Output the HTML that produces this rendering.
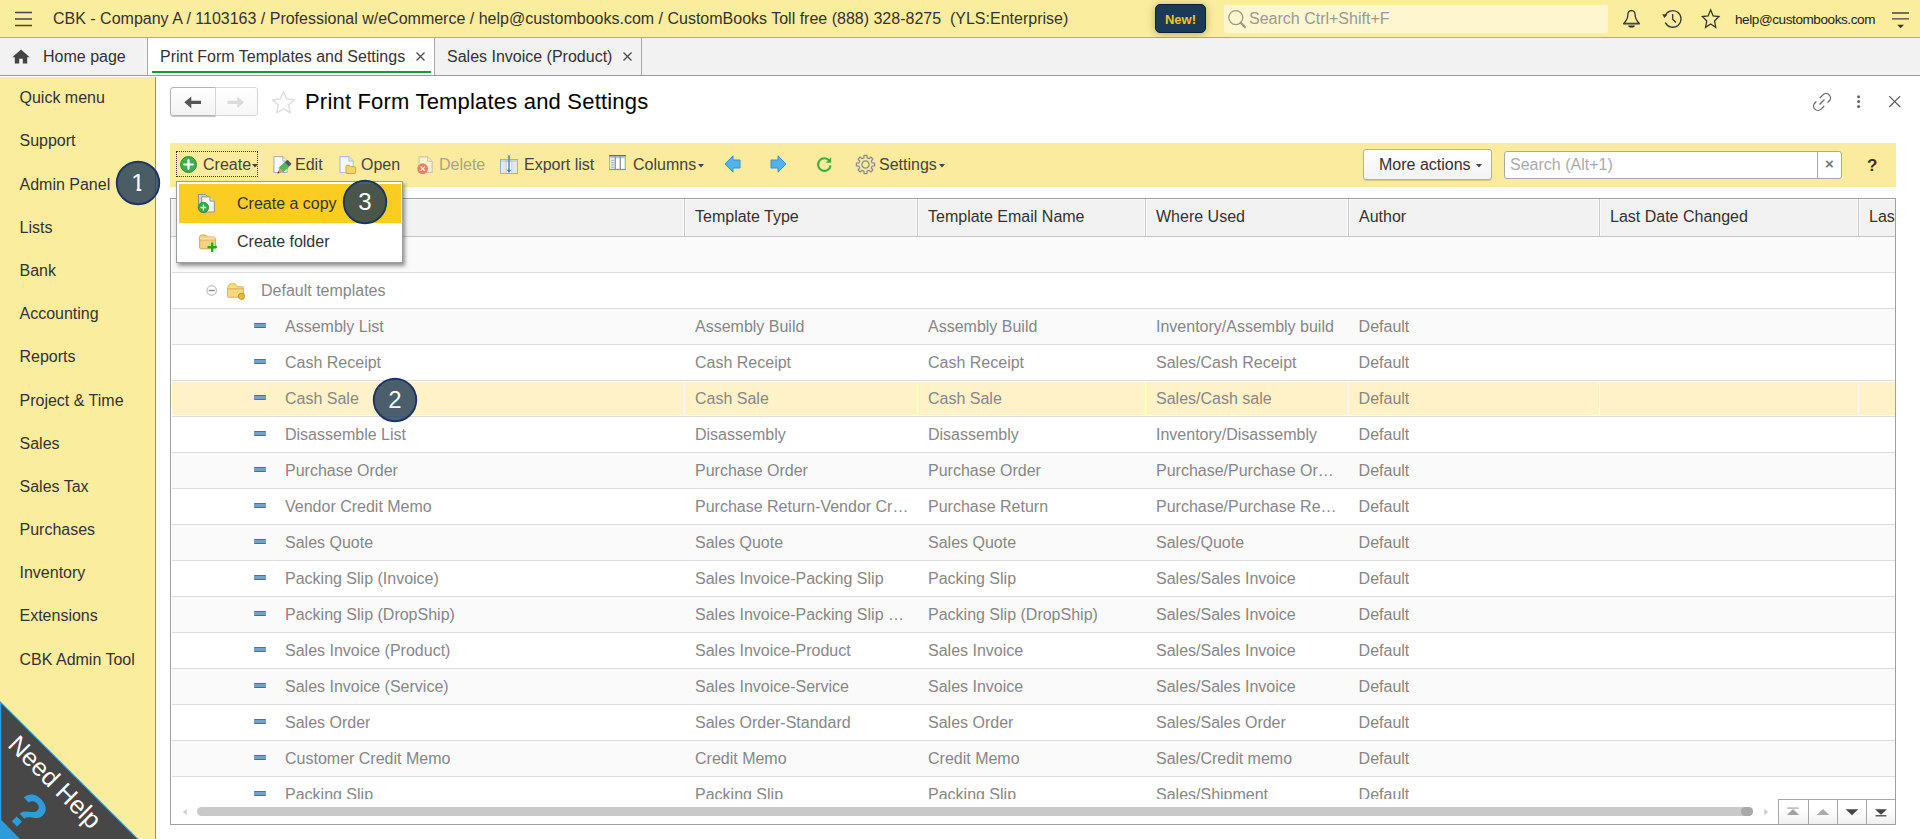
<!DOCTYPE html>
<html lang="en">
<head>
<meta charset="utf-8">
<title>Print Form Templates and Settings</title>
<style>
*{box-sizing:border-box;margin:0;padding:0}
html,body{width:1920px;height:839px;overflow:hidden;background:#fff}
body{font-family:"Liberation Sans",Arial,sans-serif;font-size:16px;color:#333;position:relative}
.abs{position:absolute}
/* top bar */
#topbar{position:absolute;left:0;top:0;width:1920px;height:38px;background:#fbed9e;border-bottom:1px solid #b3ac8a}
#topbar .title{position:absolute;left:53px;top:0;line-height:37px;font-size:16px;color:#333;white-space:pre}
#newbadge{position:absolute;left:1155px;top:4px;width:51px;height:29px;background:#1b3a57;border:1px solid #0e1f30;border-radius:5px;color:#f7c325;font-weight:bold;font-size:13px;line-height:29px;text-align:center;box-shadow:0 1px 8px rgba(0,0,0,.3)}
#gsearch{position:absolute;left:1224px;top:5px;width:384px;height:28px;background:#fef6cf;border-radius:2px}
#gsearch span{position:absolute;left:25px;top:0;line-height:27px;color:#999;font-size:16px}
#user{position:absolute;left:1735px;top:1px;line-height:38px;font-size:13.5px;letter-spacing:-0.4px;color:#222}
/* tab bar */
#tabbar{position:absolute;left:0;top:38px;width:1920px;height:38px;background:#f2f2f2;border-bottom:1px solid #999}
.tab{position:absolute;top:0;height:37px;line-height:38px;font-size:16px;color:#333;border-right:1px solid #a9a9a9;white-space:nowrap}
/* sidebar */
#side{position:absolute;left:0;top:77px;width:156px;height:762px;background:#fbed9e;border-right:1px solid #9b925e}
#side div{position:absolute;left:19.500px;font-size:16px;color:#333;line-height:20px;white-space:nowrap}
/* main */
#toolbar{position:absolute;left:170px;top:143px;width:1726px;height:44px;background:#fbeb9e}
.tb{position:absolute;top:0;line-height:43px;font-size:16px;color:#444;white-space:nowrap}
#table{position:absolute;left:170px;top:198px;width:1726px;height:627px;border:1px solid #a0a0a0;background:#fff;overflow:hidden}
.hd{position:absolute;top:0;height:38px;background:#f2f2f2;border-bottom:1px solid #c6c6c6;left:0;width:1724px}
.hc{position:absolute;top:0;height:37px;line-height:36px;font-size:16px;color:#333;border-left:1px solid #c9c9c9;padding-left:10px;white-space:nowrap;box-shadow:inset 1px 0 0 #fbfbfb,inset -1px 0 0 #fbfbfb,inset 0 1px 0 #fbfbfb}
.row{position:absolute;left:0;width:1724px;height:36px;border-bottom:1px solid #dcdcdc;background:#fff;font-size:16px;color:#878787;line-height:35px}
.row.alt{background:#fafafa}
.row.sel{background:#fff2c8;box-shadow:inset 0 1px 0 #fffdf5,inset 0 -1px 0 #fffdf5}
.row.sel b{position:absolute;top:0;width:1px;height:35px;background:#fffdf5}
.row span{position:absolute;top:0;white-space:nowrap;overflow:hidden;text-overflow:ellipsis}
.c1{left:114px}.c2{left:524px;width:214px}.c3{left:757px;width:214px}.c4{left:985px;width:182px}.c5{left:1187.600px}
.dash{position:absolute;left:82.600px;top:14px;width:12px;height:5px;background:#6fa3c8;border-top:1px solid #3f74a3;border-bottom:1px solid #3f74a3;border-radius:1px}
.badge{position:absolute;width:44.4px;height:44.4px;border-radius:50%;background:rgba(30,56,85,.8);border:2px solid #1b3562;color:#fff;font-size:24px;line-height:40.5px;text-align:center}

#rows{position:absolute;left:0;top:0;width:1724px;height:600px;overflow:hidden}
#hscroll{position:absolute;left:0;top:600px;width:1724px;height:25px;background:#fff}
#navbtns{position:absolute;left:1607px;top:600px;width:117px;height:25px;border-top:1px solid #a8a8a8;border-left:1px solid #a8a8a8;background:#fff}
.nb{position:absolute;top:0;width:29px;height:24px;border-right:1px solid #a6a6a6;background:linear-gradient(#fff 40%,#efefef)}
.nb svg{position:absolute;left:7px;top:7px}
.col{position:absolute;left:35.200px;top:12.200px;width:10.800px;height:10.800px;border:1.400px solid #c4c4c4;border-radius:50%}
.col:after{content:"";position:absolute;left:1px;top:3.300px;width:6px;height:1.400px;background:#8a8a8a}
.fold{position:absolute;left:55px;top:9px;width:20px;height:18px}
/* dropdown */
#menu{position:absolute;left:176px;top:181px;width:227px;height:82px;background:#fff;border:1px solid #9a9da3;box-shadow:2px 3px 4px rgba(0,0,0,.42)}
#menu .mi{position:absolute;left:2px;width:222px;height:39px;line-height:40px;font-size:16px;color:#333;padding-left:58px;white-space:nowrap}
#menu .mi.hl{background:#fbcd23}
/* nav buttons */
.nav{position:absolute;top:87px;height:29px;border:1px solid #b4b4b4;background:linear-gradient(#fff,#f2f2f2)}
</style>
</head>
<body>
<div id="topbar">
  <svg class="abs" style="left:15px;top:11px" width="18" height="16" viewBox="0 0 18 16"><path d="M0 1.5h17M0 8h17M0 14.5h17" stroke="#444" stroke-width="1.6" fill="none"/></svg>
  <div class="title">CBK - Company A / 1103163 / Professional w/eCommerce / help@custombooks.com / CustomBooks Toll free (888) 328-8275  (YLS:Enterprise)</div>
  <div id="newbadge">New!</div>
  <div id="gsearch"><span>Search Ctrl+Shift+F</span></div>

  <svg class="abs" style="left:1227px;top:9px" width="20" height="20" viewBox="0 0 20 20"><circle cx="8.8" cy="8.6" r="7" fill="none" stroke="#9b9787" stroke-width="1.3"/><path d="M13.8 13.8l4.2 4.4" stroke="#9b9787" stroke-width="2.2" stroke-linecap="round"/></svg>
  <svg class="abs" style="left:1621px;top:9px" width="21" height="20" viewBox="0 0 21 20"><path d="M10.500 1.600C8.300 1.600 6.900 3.300 6.900 5.600C6.900 9.400 5.500 11.900 2.700 14.400H18.300C15.500 11.900 14.100 9.400 14.100 5.600C14.100 3.300 12.700 1.600 10.500 1.600Z" fill="none" stroke="#33332e" stroke-width="1.300" stroke-linejoin="round"/><path d="M9.700 1.700L10.500 0.500L11.300 1.700z" fill="#33332e"/><path d="M2.300 14.800H18.700" stroke="#4a4838" stroke-width="1.500"/><path d="M7.200 16.400h6.600a3.300 2.100 0 0 1-6.600 0z" fill="#2b2b2b"/></svg>
  <svg class="abs" style="left:1661px;top:9px" width="22" height="20" viewBox="0 0 22 20"><path d="M3.900 7.200A8.300 8.300 0 1 1 4.300 13.600" fill="none" stroke="#3a3a3a" stroke-width="1.300"/><path d="M1.200 5.200l5.200 0.300-3 3.600z" fill="#3a3a3a"/><path d="M11.700 5v5.200l3.300 3.300" fill="none" stroke="#3a3a3a" stroke-width="1.300"/></svg>
  <svg class="abs" style="left:1700px;top:8px" width="22" height="21" viewBox="0 0 22 21"><path transform="translate(10.650 0) scale(0.900 1) translate(-11 0)" d="M11 1.800l2.700 6 6.500 0.700-4.900 4.400 1.400 6.400-5.700-3.300-5.700 3.300 1.400-6.400L1.800 8.500l6.500-0.700z" fill="none" stroke="#33332e" stroke-width="1.350" stroke-linejoin="miter"/></svg>
  <svg class="abs" style="left:1891px;top:11px" width="19" height="18" viewBox="0 0 19 18"><path d="M1 2h17M1 7.800h17" stroke="#444" stroke-width="1.300"/><path d="M6.200 13.800h6.800l-3.400 3.500z" fill="#333"/></svg>
  <div id="user">help@custombooks.com</div>
</div>
<div id="tabbar">


  <div class="tab" style="left:0;width:148px;padding-left:43px">Home page</div>
  <div class="tab" style="left:148px;width:287px;padding-left:12px;background:#fff">Print Form Templates and Settings</div>
  <div class="tab" style="left:435px;width:207px;padding-left:12px">Sales Invoice (Product)</div>
  <svg class="abs" style="left:12px;top:11px" width="18" height="15" viewBox="0 0 18 15"><path d="M9 0.500L0.300 8.200H2.800V14.500H7.200V9.700H10.800V14.500H15.200V8.200H17.700z" fill="#444"/></svg>
  <div class="abs" style="left:152px;top:33px;width:279px;height:2px;background:#0f9a3c"></div>
  <svg class="abs" style="left:415px;top:13.300px" width="11" height="11" viewBox="0 0 11 11"><path d="M1.500 1.500l8 8M9.500 1.500l-8 8" stroke="#4a4a4a" stroke-width="1.300"/></svg>
  <svg class="abs" style="left:622px;top:13.300px" width="11" height="11" viewBox="0 0 11 11"><path d="M1.500 1.500l8 8M9.500 1.500l-8 8" stroke="#4a4a4a" stroke-width="1.300"/></svg></div>
<div id="side">
  <div style="top:11px">Quick menu</div>
  <div style="top:54px">Support</div>
  <div style="top:98px">Admin Panel</div>
  <div style="top:141px">Lists</div>
  <div style="top:184px">Bank</div>
  <div style="top:227px">Accounting</div>
  <div style="top:270px">Reports</div>
  <div style="top:314px">Project &amp; Time</div>
  <div style="top:357px">Sales</div>
  <div style="top:400px">Sales Tax</div>
  <div style="top:443px">Purchases</div>
  <div style="top:486px">Inventory</div>
  <div style="top:529px">Extensions</div>
  <div style="top:573px">CBK Admin Tool</div>
</div>
<div id="main">
  <div class="abs" style="left:305px;top:88px;font-size:22px;letter-spacing:0.19px;line-height:28px;color:#000;white-space:nowrap">Print Form Templates and Settings</div>
  
  <div class="nav" style="left:170px;width:46px;border-radius:3px 0 0 3px;box-shadow:0 1px 1px rgba(0,0,0,.25)"><svg class="abs" style="left:13px;top:7.500px" width="18" height="13" viewBox="0 0 18 13"><path d="M0.300 6.300L7.300 0.400V4.700H17V7.900H7.300V12.200z" fill="#555"/></svg></div>
  <div class="nav" style="left:215px;width:43px;border-radius:0 3px 3px 0;border-color:#d6d6d6;background:linear-gradient(#fff,#f6f6f6)"><svg class="abs" style="left:11px;top:7.500px" width="18" height="13" viewBox="0 0 18 13"><path d="M17.200 6.300L10.200 0.400V4.700H0.500V7.900H10.200V12.200z" fill="#dcdcdc"/></svg></div>
  <svg class="abs" style="left:271px;top:90px" width="25" height="24" viewBox="0 0 25 24"><path d="M12.5 1.8l3.2 7.2 7.8 0.8-5.8 5.3 1.6 7.7-6.8-3.9-6.8 3.9 1.6-7.7L1.5 9.8l7.8-0.8z" fill="none" stroke="#ddd" stroke-width="1.4" stroke-linejoin="round"/></svg>

  <svg class="abs" style="left:1810px;top:90px" width="24" height="24" viewBox="-12 -12 24 24"><g transform="rotate(-45) scale(0.840)" fill="none" stroke="#6a6a6a" stroke-width="1.550"><path d="M1.500 -5.200H6.800A5.200 5.200 0 0 1 6.800 5.200H4.200"/><path d="M-1.500 5.200H-6.800A5.200 5.200 0 0 1 -6.800 -5.200H-4.200"/><path d="M-4.200 0H4.200"/></g></svg>
  <svg class="abs" style="left:1856px;top:94px" width="6" height="15" viewBox="0 0 6 15"><circle cx="2.600" cy="2.700" r="1.500" fill="#666"/><circle cx="2.600" cy="7.600" r="1.500" fill="#666"/><circle cx="2.600" cy="12.400" r="1.500" fill="#666"/></svg>
  <svg class="abs" style="left:1888px;top:95px" width="14" height="14" viewBox="0 0 14 14"><path d="M1.200 1.200l11 10.800M12.200 1.200l-11 10.800" stroke="#555" stroke-width="1.100"/></svg>
  <div id="toolbar">
  <div class="abs" style="left:6px;top:8px;width:82px;height:26px;border:1px dotted #3a3222"></div>
  <svg class="abs" style="left:10px;top:13px" width="17" height="17" viewBox="0 0 17 17"><circle cx="8.5" cy="8.5" r="8" fill="#3fae49" stroke="#2e8f3a" stroke-width="1"/><path d="M8.5 4.2v8.6M4.2 8.5h8.6" stroke="#fff" stroke-width="2.2" stroke-linecap="round"/></svg>
  
  <svg class="abs" style="left:102px;top:12px" width="22" height="21" viewBox="0 0 22 21"><path d="M1.900 1.700H10.800L15.200 6.100V17.500H1.900z" fill="#fdfdfd" stroke="#b4b4aa" stroke-width="1.200" stroke-linejoin="round"/><path d="M10.800 1.700V6.100H15.200" fill="#ececec" stroke="#b4b4aa" stroke-width="1"/><g transform="translate(17.600 6.800) rotate(136)"><rect x="0" y="-3" width="4.200" height="6" rx="0.800" fill="#4c5662"/><rect x="3.800" y="-3" width="7.900" height="6" fill="#4fba5d" stroke="#3b9a4a" stroke-width="0.500"/><path d="M11.700 -3L16.600 0L11.700 3z" fill="#d7a55e"/><path d="M14.900 -1.100L16.800 0L14.900 1.100z" fill="#3a3a3a"/></g></svg>
  <svg class="abs" style="left:168px;top:12px" width="20" height="21" viewBox="0 0 20 21"><path d="M2 1.700H10.900L15.300 6.100V17.500H2z" fill="#f3f7fc" stroke="#b5c2cf" stroke-width="1.200" stroke-linejoin="round"/><path d="M10.900 1.700V6.100H15.300" fill="#dde6f0" stroke="#b5c2cf" stroke-width="1"/><path d="M8 11.200c0-0.500 0.300-0.800 0.800-0.800h2.800l1 1.300h4.200c0.500 0 0.800 0.300 0.800 0.800v5.200c0 0.500-0.300 0.800-0.800 0.800H8.800c-0.500 0-0.800-0.300-0.800-0.800z" fill="#f2d568" stroke="#caa23c" stroke-width="0.900"/></svg>
  <svg class="abs" style="left:246px;top:12px" width="19" height="21" viewBox="0 0 19 21"><path d="M3.100 1.900H11.700L16.200 6.400V17.300H3.100z" fill="#fbf3d0" stroke="#cdc8a4" stroke-width="1.200" stroke-linejoin="round"/><path d="M11.700 1.900V6.400H16.200" fill="#f4ebc0" stroke="#cdc8a4" stroke-width="1"/><circle cx="6.700" cy="13.700" r="5.400" fill="#e8815f"/><path d="M4.600 11.600l4.200 4.200M8.800 11.600l-4.200 4.200" stroke="#fdf1ea" stroke-width="1.300"/></svg>
  <svg class="abs" style="left:329px;top:11px" width="20" height="21" viewBox="0 0 20 21"><rect x="1.500" y="5.500" width="17" height="14" fill="#fbfcfd" stroke="#9fb1c5" stroke-width="1"/><rect x="2" y="6" width="16" height="2.200" fill="#c9d5e2"/><rect x="2" y="8.200" width="4.800" height="10.800" fill="#e3e8ee"/><rect x="13.200" y="8.200" width="4.800" height="10.800" fill="#e3e8ee"/><path d="M7.200 6v13M12.800 6v13" stroke="#b4c2d1" stroke-width="0.900"/><path d="M10 2v14.500" stroke="#4f85c3" stroke-width="1.500"/><path d="M7.700 15.800h4.600l-2.300 3.200z" fill="#3f77b8"/><path d="M8.600 1l2.800 2.600M11.400 1l-2.800 2.600" stroke="#5b8fc9" stroke-width="0.800"/></svg>
  <svg class="abs" style="left:438px;top:11px" width="19" height="17" viewBox="0 0 19 17"><rect x="1.700" y="1.700" width="15.500" height="13.700" fill="#fff" stroke="#94a1ae" stroke-width="1"/><rect x="2.200" y="2.200" width="14.500" height="2" fill="#b9c2cb"/><rect x="1.200" y="1.100" width="16.500" height="1.100" fill="#2e6da4"/><rect x="2.200" y="4.200" width="4.600" height="10.700" fill="#e9edf1"/><path d="M7.300 2.300v13M12.300 2.300v13" stroke="#8d9aa8" stroke-width="1.400"/><path d="M3.300 6.300h2.500M3.300 8.600h2.500M3.300 10.900h2.500M3.300 13.200h2.500" stroke="#8d9aa8" stroke-width="0.900"/><path d="M1.200 15.500h16.500" stroke="#8a959f" stroke-width="1.200"/></svg>
  <svg class="abs" style="left:554px;top:12px" width="17" height="18" viewBox="0 0 17 18"><path d="M1 9L9 0.800V5H16V13H9V17.200z" fill="#4eb3ee" stroke="#3a90c9" stroke-width="1" stroke-linejoin="round"/></svg>
  <svg class="abs" style="left:600px;top:12px" width="17" height="18" viewBox="0 0 17 18"><path d="M16 9L8 0.800V5H1V13H8V17.200z" fill="#4eb3ee" stroke="#3a90c9" stroke-width="1" stroke-linejoin="round"/></svg>
  <svg class="abs" style="left:646px;top:13px" width="17" height="17" viewBox="0 0 17 17"><path d="M13.700 5.200A6.300 6.300 0 1 0 14.600 9.500" fill="none" stroke="#3dae3d" stroke-width="2.100"/><path d="M9.800 6.800L15.200 1.200V6.800z" fill="#3dae3d"/></svg>
  <svg class="abs" style="left:685px;top:11px" width="21" height="21" viewBox="-10.500 -10.500 21 21"><path d="M-1.59 -6.61 L-1.44 -9.09 L1.44 -9.09 L1.59 -6.61 L3.55 -5.80 L5.41 -7.44 L7.44 -5.41 L5.80 -3.55 L6.61 -1.59 L9.09 -1.44 L9.09 1.44 L6.61 1.59 L5.80 3.55 L7.44 5.41 L5.41 7.44 L3.55 5.80 L1.59 6.61 L1.44 9.09 L-1.44 9.09 L-1.59 6.61 L-3.55 5.80 L-5.41 7.44 L-7.44 5.41 L-5.80 3.55 L-6.61 1.59 L-9.09 1.44 L-9.09 -1.44 L-6.61 -1.59 L-5.80 -3.55 L-7.44 -5.41 L-5.41 -7.44 L-3.55 -5.80Z" fill="none" stroke="#8c8c8c" stroke-width="1.300" stroke-linejoin="round"/><circle r="3.600" fill="none" stroke="#8c8c8c" stroke-width="1.300"/></svg>
  <div class="tb" style="left:33px">Create</div>
  <svg class="abs" style="left:82px;top:21px" width="6" height="4" viewBox="0 0 6 4"><path d="M0 0h6L3 3.5z" fill="#444"/></svg>
  <div class="tb" style="left:125px">Edit</div>
  <div class="tb" style="left:191px">Open</div>
  <div class="tb" style="left:269px;color:#aaa48a">Delete</div>
  <div class="tb" style="left:354px">Export list</div>
  <div class="tb" style="left:463px">Columns</div>
  <svg class="abs" style="left:528px;top:21px" width="6" height="4" viewBox="0 0 6 4"><path d="M0 0h6L3 3.5z" fill="#444"/></svg>
  <div class="tb" style="left:709px">Settings</div>
  <svg class="abs" style="left:769px;top:21px" width="6" height="4" viewBox="0 0 6 4"><path d="M0 0h6L3 3.5z" fill="#444"/></svg>
  <div class="abs" style="left:1193px;top:6px;width:129px;height:31px;border:1px solid #b0b0b0;border-radius:3px;background:linear-gradient(#fff,#f3f3f3);box-shadow:0 1px 1px rgba(0,0,0,.15);line-height:29px;padding-left:15px;font-size:16px;color:#333">More actions</div>
  <svg class="abs" style="left:1306px;top:21px" width="6" height="4" viewBox="0 0 6 4"><path d="M0 0h6L3 3.5z" fill="#444"/></svg>
  <div class="abs" style="left:1334px;top:8px;width:338px;height:28px;border:1px solid #a8a8a8;border-radius:3px;background:#fff;line-height:26px;padding-left:5px;font-size:16px;color:#aaa">Search (Alt+1)
    <div class="abs" style="left:312px;top:0;width:1px;height:26px;background:#a8a8a8"></div>
    <div class="abs" style="left:313px;top:0;width:23px;height:26px;line-height:24px;text-align:center;font-size:15px;color:#777;padding:0;font-weight:bold">×</div>
  </div>
  <div class="abs" style="left:1697px;top:1px;line-height:44px;font-size:17px;font-weight:bold;color:#333">?</div>
</div>
  <div id="table">
<div id="rows">
<div class="hd">
  <div class="hc" style="left:0px;width:513px;border-left:0;box-shadow:inset -1px 0 0 #fbfbfb,inset 0 1px 0 #fbfbfb"></div>
  <div class="hc" style="left:513px;width:233px">Template Type</div>
  <div class="hc" style="left:746px;width:228px">Template Email Name</div>
  <div class="hc" style="left:974px;width:203px">Where Used</div>
  <div class="hc" style="left:1177px;width:251px">Author</div>
  <div class="hc" style="left:1428px;width:259px">Last Date Changed</div>
  <div class="hc" style="left:1687px;width:40px">Las</div>
</div>
<div class="row alt" style="top:38px"></div>
<div class="row" style="top:74px"><svg class="abs" style="left:34px;top:11px" width="14" height="14" viewBox="0 0 14 14"><circle cx="6.700" cy="6.500" r="4.700" fill="#fff" stroke="#c6c6c6" stroke-width="1.400"/><path d="M3.700 6.500h6" stroke="#8a8a8a" stroke-width="1.400"/></svg><svg class="fold" viewBox="0 0 20 18"><path d="M1.500 7.200V5.400L3.900 1.800H9L10.900 4.700H16.700Q17.600 4.700 17.600 5.600V7.200Z" fill="#fde26c" stroke="#dcaa5c" stroke-width="0.900" stroke-linejoin="round"/><rect x="1.500" y="6.900" width="16.100" height="8.400" rx="1" fill="#f6d97f" stroke="#dcaa5c" stroke-width="0.900"/><circle cx="15.500" cy="14.300" r="3.100" fill="#e9be2a" stroke="#a48c12" stroke-width="0.800"/></svg><span style="left:90px">Default templates</span></div>
<div class="row alt" style="top:110px"><i class="dash"></i><span class="c1">Assembly List</span><span class="c2">Assembly Build</span><span class="c3">Assembly Build</span><span class="c4">Inventory/Assembly build</span><span class="c5">Default</span></div>
<div class="row" style="top:146px"><i class="dash"></i><span class="c1">Cash Receipt</span><span class="c2">Cash Receipt</span><span class="c3">Cash Receipt</span><span class="c4">Sales/Cash Receipt</span><span class="c5">Default</span></div>
<div class="row sel" style="top:182px"><b style="left:513px"></b><b style="left:746px"></b><b style="left:974px"></b><b style="left:1177px"></b><b style="left:1428px"></b><b style="left:1687px"></b><i class="dash"></i><span class="c1">Cash Sale</span><span class="c2">Cash Sale</span><span class="c3">Cash Sale</span><span class="c4">Sales/Cash sale</span><span class="c5">Default</span></div>
<div class="row" style="top:218px"><i class="dash"></i><span class="c1">Disassemble List</span><span class="c2">Disassembly</span><span class="c3">Disassembly</span><span class="c4">Inventory/Disassembly</span><span class="c5">Default</span></div>
<div class="row alt" style="top:254px"><i class="dash"></i><span class="c1">Purchase Order</span><span class="c2">Purchase Order</span><span class="c3">Purchase Order</span><span class="c4">Purchase/Purchase Order</span><span class="c5">Default</span></div>
<div class="row" style="top:290px"><i class="dash"></i><span class="c1">Vendor Credit Memo</span><span class="c2">Purchase Return-Vendor Credit Memo</span><span class="c3">Purchase Return</span><span class="c4">Purchase/Purchase Return</span><span class="c5">Default</span></div>
<div class="row alt" style="top:326px"><i class="dash"></i><span class="c1">Sales Quote</span><span class="c2">Sales Quote</span><span class="c3">Sales Quote</span><span class="c4">Sales/Quote</span><span class="c5">Default</span></div>
<div class="row" style="top:362px"><i class="dash"></i><span class="c1">Packing Slip (Invoice)</span><span class="c2">Sales Invoice-Packing Slip</span><span class="c3">Packing Slip</span><span class="c4">Sales/Sales Invoice</span><span class="c5">Default</span></div>
<div class="row alt" style="top:398px"><i class="dash"></i><span class="c1">Packing Slip (DropShip)</span><span class="c2">Sales Invoice-Packing Slip (DropShip)</span><span class="c3">Packing Slip (DropShip)</span><span class="c4">Sales/Sales Invoice</span><span class="c5">Default</span></div>
<div class="row" style="top:434px"><i class="dash"></i><span class="c1">Sales Invoice (Product)</span><span class="c2">Sales Invoice-Product</span><span class="c3">Sales Invoice</span><span class="c4">Sales/Sales Invoice</span><span class="c5">Default</span></div>
<div class="row alt" style="top:470px"><i class="dash"></i><span class="c1">Sales Invoice (Service)</span><span class="c2">Sales Invoice-Service</span><span class="c3">Sales Invoice</span><span class="c4">Sales/Sales Invoice</span><span class="c5">Default</span></div>
<div class="row" style="top:506px"><i class="dash"></i><span class="c1">Sales Order</span><span class="c2">Sales Order-Standard</span><span class="c3">Sales Order</span><span class="c4">Sales/Sales Order</span><span class="c5">Default</span></div>
<div class="row alt" style="top:542px"><i class="dash"></i><span class="c1">Customer Credit Memo</span><span class="c2">Credit Memo</span><span class="c3">Credit Memo</span><span class="c4">Sales/Credit memo</span><span class="c5">Default</span></div>
<div class="row" style="top:578px"><i class="dash"></i><span class="c1">Packing Slip</span><span class="c2">Packing Slip</span><span class="c3">Packing Slip</span><span class="c4">Sales/Shipment</span><span class="c5">Default</span></div>
<div class="abs" style="left:0;top:38px;width:1px;height:562px;background:#fff"></div>
</div>
<div id="hscroll">
  <svg class="abs" style="left:11px;top:9px" width="6" height="8" viewBox="0 0 6 8"><path d="M4.800 1v6.200L0.800 4.100z" fill="#cfcfcf"/></svg>
  <div class="abs" style="left:26px;top:8px;width:1556px;height:9px;border-radius:5px;background:#c9c9c9"></div>
  <div class="abs" style="left:1570px;top:8px;width:12px;height:9px;border-radius:4.500px;background:#a9a9a9"></div>
  <svg class="abs" style="left:1592px;top:9px" width="6" height="8" viewBox="0 0 6 8"><path d="M1.200 1v6.200L5.200 4.100z" fill="#cfcfcf"/></svg>
</div>
<div id="navbtns">
  <div class="nb" style="left:0;width:30px"><svg width="14" height="10" viewBox="0 0 14 10"><path d="M1.300 1.100h11.400" stroke="#a2a2a2" stroke-width="1.200"/><path d="M7 2.100l6.200 6H0.800z" fill="#a2a2a2"/></svg></div>
  <div class="nb" style="left:30px"><svg width="14" height="10" viewBox="0 0 14 10"><path d="M7 1.900l6.400 6H0.600z" fill="#ababab"/></svg></div>
  <div class="nb" style="left:59px"><svg width="14" height="10" viewBox="0 0 14 10"><path d="M7 8.300l6.400-6H0.600z" fill="#444"/></svg></div>
  <div class="nb" style="left:88px;width:28px;border-right:0"><svg width="14" height="10" viewBox="0 0 14 10"><path d="M1.600 8.800h10.800" stroke="#444" stroke-width="1.300"/><path d="M7 7.800l6-5.600H1z" fill="#444"/></svg></div>
</div>
</div>
</div>
</div>


<svg class="abs" style="left:0;top:700px" width="142" height="139" viewBox="0 0 142 139">
  <path d="M0 1L138.500 139H0z" fill="#2e9bda"/>
  <path d="M1.300 3.800L136.800 139H20L1.300 120z" fill="#474747"/>
  <text x="0" y="0" transform="translate(6.800 46) rotate(45)" font-family="Liberation Sans, Arial, sans-serif" font-size="25.200" fill="#fff">Need Help</text>
  <text x="0" y="0" transform="translate(4 113.500) rotate(45)" font-family="Liberation Sans, Arial, sans-serif" font-size="52" font-weight="bold" fill="#2e9bda">?</text>
</svg>
<div id="menu">


  <div class="mi hl" style="top:2px">Create a copy</div>
  <div class="mi" style="top:41px;line-height:38px">Create folder</div>
  <svg class="abs" style="left:20px;top:11px" width="20" height="21" viewBox="0 0 20 21"><path d="M1.500 1.500h7l2.500 2.500v10.500h-9.500z" fill="#d6d2bc" stroke="#8f938c" stroke-width="1"/><path d="M4.700 3.800h8.300l4.300 4.300v10.900h-12.600z" fill="#f6f7f5" stroke="#8f938c" stroke-width="1"/><path d="M13 3.800v4.300h4.300" fill="#e2e6e2" stroke="#8f938c" stroke-width="1"/><circle cx="6.400" cy="14.500" r="5.200" fill="#34a944" stroke="#2a8f39" stroke-width="0.800"/><path d="M6.400 11.600v5.800M3.500 14.500h5.800" stroke="#f4fbf4" stroke-width="1.400"/></svg>
  <svg class="abs" style="left:21px;top:51px" width="21" height="21" viewBox="0 0 21 21"><path d="M1.700 3.800c0-1 0.700-1.800 1.800-1.800h4.200l1.800 2h6.300c1 0 1.800 0.700 1.800 1.800v9c0 0.600-0.400 1-1 1H2.700c-0.600 0-1-0.400-1-1z" fill="#f5d27c" stroke="#d9a648" stroke-width="1"/><path d="M2.200 5h15M2.200 6h15" stroke="#fbe4a2" stroke-width="1"/><path d="M2 7.200h15.600" stroke="#e2b255" stroke-width="0.800"/><path d="M14.200 9.500v9.400M9.500 14.200h9.400" stroke="#12b01c" stroke-width="2.200"/></svg></div>
<svg class="abs" style="left:115px;top:160px" width="46" height="46" viewBox="0 0 46 46"><circle cx="23" cy="23" r="21.250" fill="rgba(30,56,85,.8)" stroke="#1b3562" stroke-width="1.900"/><clipPath id="stem1"><path d="M0 0H46V28.300H26.400V40H21.600V28.300H0Z"/></clipPath><text x="23" y="30.800" text-anchor="middle" font-family="Liberation Sans, Arial, sans-serif" font-size="24" fill="#fff" clip-path="url(#stem1)">1</text></svg>
<svg class="abs" style="left:372.1px;top:377.1px" width="46" height="46" viewBox="0 0 46 46"><circle cx="23" cy="23" r="21.250" fill="rgba(30,56,85,.8)" stroke="#1b3562" stroke-width="1.900"/><text x="23" y="30.800" text-anchor="middle" font-family="Liberation Sans, Arial, sans-serif" font-size="24" fill="#fff">2</text></svg>
<svg class="abs" style="left:342.15px;top:179.2px" width="46" height="46" viewBox="0 0 46 46"><circle cx="23" cy="23" r="21.250" fill="rgba(30,56,85,.8)" stroke="#1b3562" stroke-width="1.900"/><text x="23" y="30.800" text-anchor="middle" font-family="Liberation Sans, Arial, sans-serif" font-size="24" fill="#fff">3</text></svg>
</body>
</html>
